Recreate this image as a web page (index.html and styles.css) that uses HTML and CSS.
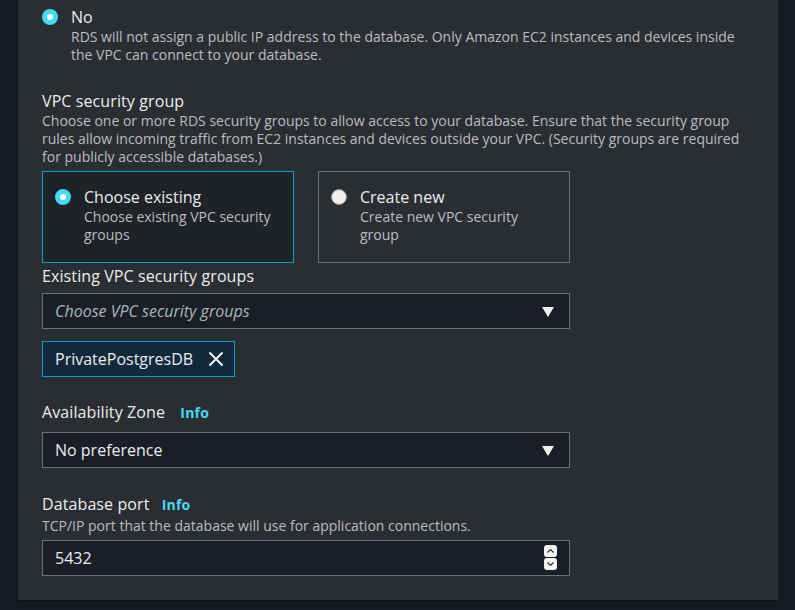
FILE: index.html
```html
<!DOCTYPE html>
<html lang="en">
<head>
<meta charset="utf-8">
<title>Connectivity</title>
<link rel="stylesheet" href="styles.css">
</head>
<body>
<div class="page">
  <div class="panel">
    <div class="radio-row">
      <span class="radio on"></span>
      <div class="radio-text">
        <div class="radio-title">No</div>
        <div class="desc">RDS will not assign a public IP address to the database. Only Amazon EC2 instances and devices inside<br>the VPC can connect to your database.</div>
      </div>
    </div>

    <div class="field field-vpc">
      <div class="label">VPC security group</div>
      <div class="desc">Choose one or more RDS security groups to allow access to your database. Ensure that the security group<br>rules allow incoming traffic from EC2 instances and devices outside your VPC. (Security groups are required<br>for publicly accessible databases.)</div>
      <div class="tiles">
        <div class="tile selected">
          <span class="radio on"></span>
          <div class="radio-text">
            <div class="radio-title">Choose existing</div>
            <div class="desc">Choose existing VPC security<br>groups</div>
          </div>
        </div>
        <div class="tile">
          <span class="radio off"></span>
          <div class="radio-text">
            <div class="radio-title">Create new</div>
            <div class="desc">Create new VPC security<br>group</div>
          </div>
        </div>
      </div>
    </div>

    <div class="field field-existing">
      <div class="label label-tight">Existing VPC security groups</div>
      <div class="select">
        <span class="placeholder">Choose VPC security groups</span>
        <span class="caret"></span>
      </div>
      <div class="token">
        <span class="token-text">PrivatePostgresDB</span>
        <svg class="token-x" width="16" height="16" viewBox="0 0 16 16"><path d="M1.5 1.5 L14.5 14.5 M14.5 1.5 L1.5 14.5" stroke="#f2f3f3" stroke-width="2" fill="none"/></svg>
      </div>
    </div>

    <div class="field field-az">
      <div class="label label-az">Availability Zone <span class="info">Info</span></div>
      <div class="select">
        <span class="value">No preference</span>
        <span class="caret"></span>
      </div>
    </div>

    <div class="field field-port">
      <div class="label">Database port <span class="info info-port">Info</span></div>
      <div class="desc desc-port">TCP/IP port that the database will use for application connections.</div>
      <div class="select input">
        <span class="value">5432</span>
        <span class="spinner">
          <span class="spin-btn up"><svg width="9" height="6" viewBox="0 0 9 6"><path d="M1.5 4.5 L4.5 1.5 L7.5 4.5" stroke="#333" stroke-width="1.2" fill="none"/></svg></span>
          <span class="spin-btn down"><svg width="9" height="6" viewBox="0 0 9 6"><path d="M1.5 1.5 L4.5 4.5 L7.5 1.5" stroke="#333" stroke-width="1.2" fill="none"/></svg></span>
        </span>
      </div>
    </div>
  </div>
</div>
</body>
</html>
```
FILE: styles.css
```css
html, body {
  margin: 0;
  padding: 0;
  background: #16191f;
}
body {
  font-family: "Open Sans", "Noto Sans", sans-serif;
  color: #eaeded;
  width: 795px;
  height: 610px;
  overflow: hidden;
}
.page {
  padding-left: 18px;
}
.panel {
  width: 736px;
  height: 594px;
  background: #2a2e33;
  padding: 6px 0 0 24px;
  box-shadow: 0 1px 1px rgba(0,0,0,0.4);
}
.radio-row {
  display: flex;
  gap: 13px;
  align-items: flex-start;
}
.radio {
  flex: none;
  width: 16px;
  height: 16px;
  border-radius: 50%;
  box-sizing: border-box;
  margin-top: 3px;
}
.radio.on {
  background: #ffffff;
  border: 5px solid #44d9f5;
}
.radio.off {
  background: #f2efea;
  border: 1px solid #8d9396;
}
.radio-title {
  font-size: 16px;
  line-height: 22px;
  color: #eaeded;
}
.desc {
  font-size: 14px;
  line-height: 18px;
  color: #b9bdc1;
}
.label {
  font-size: 16px;
  line-height: 22px;
  color: #eaeded;
  letter-spacing: 0.1px;
}
.field-vpc {
  margin-top: 26px;
}
.tiles {
  display: flex;
  gap: 24px;
  margin-top: 5px;
}
.tile {
  width: 252px;
  box-sizing: border-box;
  border: 1px solid #687078;
  padding: 14px 12px 18px 12px;
  display: flex;
  gap: 13px;
  align-items: flex-start;
}
.tile.selected {
  border-color: #00a1c9;
  background: #1f2327;
}
.field-existing {
  margin-top: 2px;
}
.label-tight {
  margin-bottom: 6px;
}
.select {
  width: 528px;
  height: 36px;
  box-sizing: border-box;
  border: 1px solid #687078;
  background: #1a1f27;
  display: flex;
  align-items: center;
  justify-content: space-between;
  padding: 0 15px 0 12px;
  font-size: 16px;
}
.placeholder {
  font-style: italic;
  color: #aab7b8;
}
.value {
  color: #eaeded;
}
.caret {
  width: 0;
  height: 0;
  border-left: 6px solid transparent;
  border-right: 6px solid transparent;
  border-top: 10px solid #f2efea;
  margin-top: 1px;
}
.token {
  margin-top: 12px;
  display: inline-flex;
  align-items: center;
  gap: 15px;
  height: 36px;
  box-sizing: border-box;
  border: 1px solid #00a1c9;
  background: #12293b;
  padding: 0 10px 0 12px;
  font-size: 16px;
  color: #eaeded;
}
.token-x {
  display: block;
}
.field-az {
  margin-top: 24px;
}
.label-az {
  margin-bottom: 8px;
}
.info {
  font-size: 14px;
  font-weight: 700;
  color: #44d9f5;
  margin-left: 11px;
  letter-spacing: 0.2px;
}
.info-port {
  margin-left: 8px;
}
.field-port {
  margin-top: 25px;
}
.desc-port {
  margin-top: 1px;
  margin-bottom: 5px;
}
.input {
  padding-right: 12px;
}
.spinner {
  display: flex;
  flex-direction: column;
  gap: 1px;
  margin-top: -1px;
}
.spin-btn {
  width: 13px;
  height: 12px;
  background: #f4f4f4;
  border-radius: 3px;
  display: flex;
  align-items: center;
  justify-content: center;
}
```
